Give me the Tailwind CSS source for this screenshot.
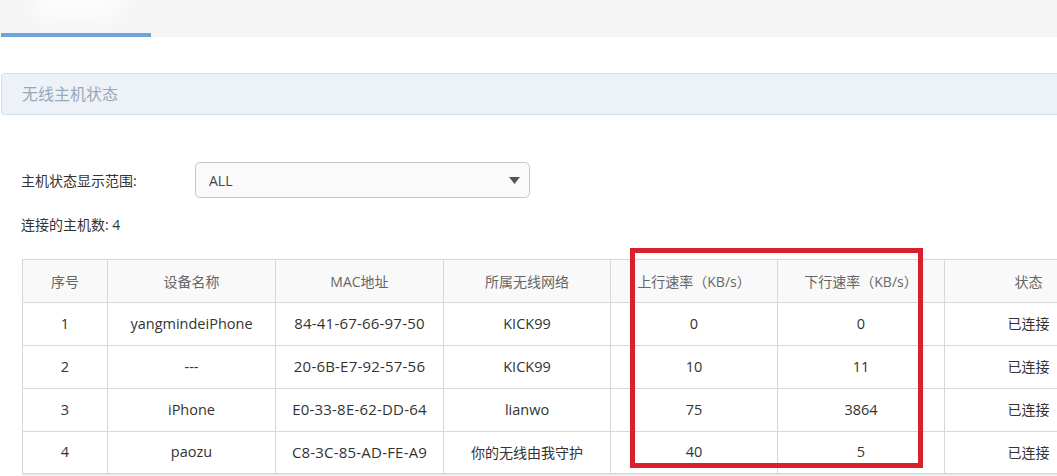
<!DOCTYPE html>
<html lang="zh-CN">
<head>
    <meta charset="UTF-8">
    <title>无线主机状态</title>
    <script src="https://cdn.jsdelivr.net/npm/@tailwindcss/browser@4"></script>
</head>
<body class="bg-white w-[1057px] h-[476px] overflow-hidden font-['Open_Sans','Noto_Sans_CJK_SC',sans-serif] text-[#333]">
<!-- 顶部标签栏 -->
<div class="relative h-[37px] bg-[#f5f5f5] overflow-hidden">
    <div class="absolute left-[30px] top-[-14px] w-[95px] h-[34px] rounded-full bg-white/80 blur-md"></div>
    <div class="absolute left-[1px] bottom-0 w-[150px] h-[4px] bg-[#6ba5dc]"></div>
</div>

<!-- 标题 -->
<div class="ml-[1px] mt-[36px] h-[42px] flex items-center pl-[20px] bg-[#edf2f9] border border-[#d6e0ea] border-r-0 rounded-l-[4px] text-[16px] text-[#9aa9ba]">无线主机状态</div>

<!-- 范围选择 -->
<div class="flex items-center mt-[47px] ml-[21px] h-[36px]">
    <label class="w-[174px] text-[14px]">主机状态显示范围:</label>
    <div class="w-[335px] h-[36px] flex items-center justify-between pl-[13px] pr-[9px] bg-[#fafafa] border border-[#c8c8c8] rounded-[5px] text-[14px] text-[#444]">
        <span>ALL</span>
        <svg width="11" height="7" viewBox="0 0 11 7"><path d="M0 0h11L5.5 7z" fill="#555"/></svg>
    </div>
</div>
<p class="mt-[18px] ml-[21px] text-[14px] leading-[18px]">连接的主机数: 4</p>

<!-- 主机表格 -->
<div class="relative mt-[14px] ml-[22px] w-[1035px] h-[228px] pt-[11px] overflow-hidden">
    <table class="table-fixed border-collapse w-[1090px] text-[14.5px] text-center shadow-[0_1px_2px_rgba(0,0,0,0.15)]">
        <colgroup>
            <col class="w-[85px]"><col class="w-[168px]"><col class="w-[168px]"><col class="w-[167px]"><col class="w-[167px]"><col class="w-[167px]"><col class="w-[168px]">
        </colgroup>
        <thead class="bg-[#f9f9f9] text-[#666] text-[14px]">
            <tr class="h-[43px]">
                <th class="font-normal border border-[#d8d8d8]">序号</th>
                <th class="font-normal border border-[#d8d8d8]">设备名称</th>
                <th class="font-normal border border-[#d8d8d8]">MAC地址</th>
                <th class="font-normal border border-[#d8d8d8]">所属无线网络</th>
                <th class="font-normal border border-[#d8d8d8]">上行速率（KB/s）</th>
                <th class="font-normal border border-[#d8d8d8]">下行速率（KB/s）</th>
                <th class="font-normal border border-[#d8d8d8]">状态</th>
            </tr>
        </thead>
        <tbody>
            <tr class="h-[43px]">
                <td class="border border-[#d8d8d8] pb-[1px]">1</td>
                <td class="border border-[#d8d8d8] pb-[1px]">yangmindeiPhone</td>
                <td class="border border-[#d8d8d8] pb-[1px] text-[15px] tracking-[0.2px]">84-41-67-66-97-50</td>
                <td class="border border-[#d8d8d8] pb-[1px]">KICK99</td>
                <td class="border border-[#d8d8d8] pb-[1px]">0</td>
                <td class="border border-[#d8d8d8] pb-[1px]">0</td>
                <td class="border border-[#d8d8d8] pb-[1px] text-[14px]">已连接</td>
            </tr>
            <tr class="h-[43px]">
                <td class="border border-[#d8d8d8] pb-[1px]">2</td>
                <td class="border border-[#d8d8d8] pb-[1px]">---</td>
                <td class="border border-[#d8d8d8] pb-[1px] text-[15px] tracking-[0.2px]">20-6B-E7-92-57-56</td>
                <td class="border border-[#d8d8d8] pb-[1px]">KICK99</td>
                <td class="border border-[#d8d8d8] pb-[1px]">10</td>
                <td class="border border-[#d8d8d8] pb-[1px]">11</td>
                <td class="border border-[#d8d8d8] pb-[1px] text-[14px]">已连接</td>
            </tr>
            <tr class="h-[43px]">
                <td class="border border-[#d8d8d8] pb-[1px]">3</td>
                <td class="border border-[#d8d8d8] pb-[1px]">iPhone</td>
                <td class="border border-[#d8d8d8] pb-[1px] text-[15px] tracking-[0.2px]">E0-33-8E-62-DD-64</td>
                <td class="border border-[#d8d8d8] pb-[1px]">lianwo</td>
                <td class="border border-[#d8d8d8] pb-[1px]">75</td>
                <td class="border border-[#d8d8d8] pb-[1px]">3864</td>
                <td class="border border-[#d8d8d8] pb-[1px] text-[14px]">已连接</td>
            </tr>
            <tr class="h-[42px]">
                <td class="border border-[#d8d8d8] pb-[1px]">4</td>
                <td class="border border-[#d8d8d8] pb-[1px]">paozu</td>
                <td class="border border-[#d8d8d8] pb-[1px] text-[15px] tracking-[0.2px]">C8-3C-85-AD-FE-A9</td>
                <td class="border border-[#d8d8d8] pb-[1px] text-[14px]">你的无线由我守护</td>
                <td class="border border-[#d8d8d8] pb-[1px]">40</td>
                <td class="border border-[#d8d8d8] pb-[1px]">5</td>
                <td class="border border-[#d8d8d8] pb-[1px] text-[14px]">已连接</td>
            </tr>
        </tbody>
    </table>
    <!-- 红色标注框 -->
    <div class="absolute left-[608px] top-0 w-[293px] h-[220px] border-[5px] border-[#d9202c]"></div>
</div>
</body>
</html>
